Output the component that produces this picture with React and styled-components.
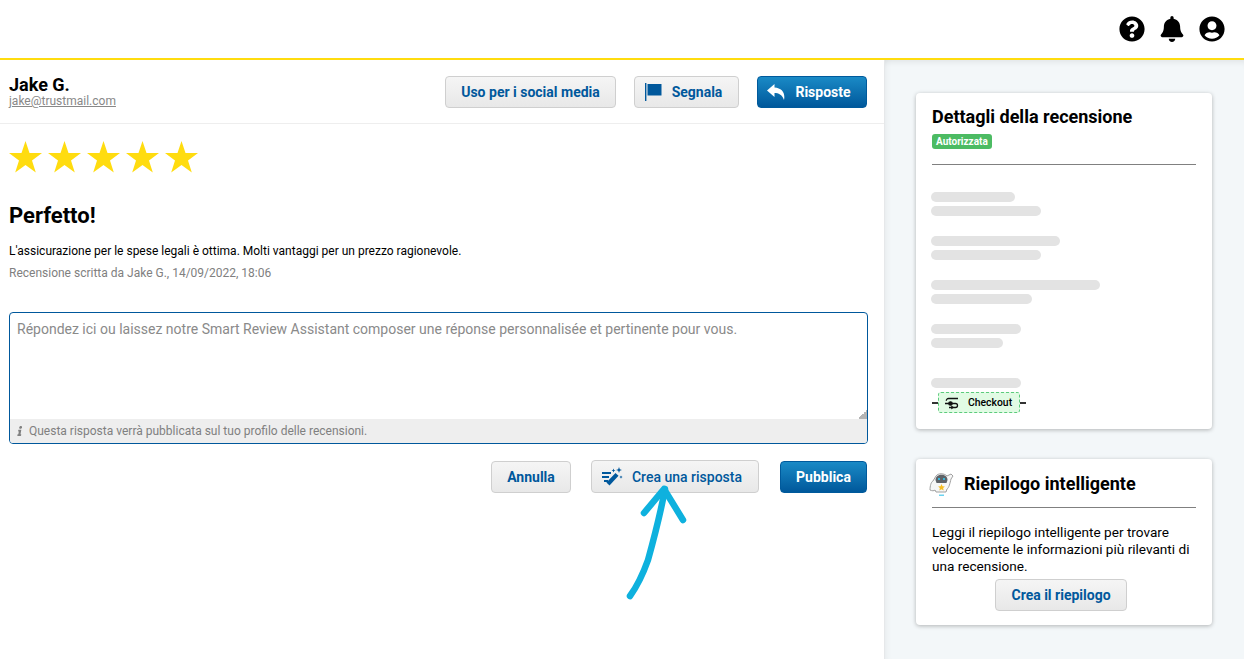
import React from 'react'
import styled, { createGlobalStyle, css } from 'styled-components'
import { FaQuestionCircle, FaBell, FaUserCircle, FaInfo } from 'react-icons/fa'

const GlobalStyle = createGlobalStyle`
  html, body {
    margin: 0;
    height: 100%;
    overflow: hidden;
    background: #fff;
    font-family: Roboto, "Liberation Sans", sans-serif;
    color: #000;
  }
  #root { height: 100%; }
  * { box-sizing: border-box; }
`

const Page = styled.div`
  position: relative;
  display: flex;
  flex-direction: column;
  height: 659px;
  overflow: hidden;
`

const TopBar = styled.header`
  height: 60px;
  flex: none;
  display: flex;
  align-items: center;
  justify-content: flex-end;
  gap: 14px;
  padding: 0 19px 1px 0;
  background: #fff;
  border-bottom: 2px solid #ffdc0f;
  font-size: 26px;
  svg { display: block; }
`

const Body = styled.div`
  flex: 1;
  display: flex;
  min-height: 0;
`

const Main = styled.main`
  width: 885px;
  flex: none;
  background: #fff;
  border-right: 1px solid #e6e8ea;
`

const ReviewHead = styled.div`
  height: 64px;
  display: flex;
  align-items: flex-start;
  justify-content: space-between;
  padding: 16px 17px 0 9px;
  border-bottom: 1px solid #eeeeee;
`

const Reviewer = styled.div`
  margin-top: -1px;
  h3 {
    margin: 0;
    font-size: 18px;
    line-height: 19px;
    font-weight: 700;
  }
  a {
    display: block;
    font-size: 12px;
    line-height: 15px;
    color: #888;
    text-decoration: underline;
  }
`

const ButtonRow = styled.div`
  display: flex;
  justify-content: flex-end;
  align-items: center;
  gap: 18px;
`

const Button = styled.button`
  height: ${({ $tall }) => ($tall ? 33 : 32)}px;
  width: ${({ $w }) => $w}px;
  display: flex;
  align-items: center;
  justify-content: center;
  gap: ${({ $iconGap }) => $iconGap || 0}px;
  padding: 0 ${({ $iconGap }) => ($iconGap ? 6 : 0)}px 0 0;
  border-radius: 4px;
  font-family: Roboto, sans-serif;
  font-size: 14px;
  font-weight: ${({ $medium }) => ($medium ? 500 : 700)};
  ${({ $primary }) =>
    $primary
      ? css`
          color: #fff;
          border: 1px solid #005a9c;
          background: linear-gradient(180deg, #1a8ac6 0%, #00589b 100%);
        `
      : css`
          color: #00589c;
          border: 1px solid #cfcfcf;
          background: linear-gradient(180deg, #f5f5f5 0%, #e8e8e8 100%);
        `}
  svg { flex: none; display: block; }
`

const Stars = styled.div`
  display: flex;
  gap: 6px;
  padding: 16px 0 0 9px;
`

const Content = styled.section`
  padding: 0 16px 0 9px;
`

const Title = styled.h1`
  margin: 29px 0 0;
  font-size: 22px;
  line-height: 28px;
  font-weight: 700;
`

const Text = styled.p`
  margin: 13px 0 0;
  font-size: 12px;
  line-height: 16px;
`

const Meta = styled.p`
  margin: 6px 0 0;
  font-size: 12px;
  line-height: 16px;
  color: #808080;
`

const ReplyBox = styled.div`
  position: relative;
  margin-top: 31px;
  height: 132px;
  display: flex;
  flex-direction: column;
  border: 1px solid #00589c;
  border-radius: 4px;
  overflow: hidden;
`

const Placeholder = styled.div`
  flex: 1;
  padding: 8px 7px;
  font-size: 14px;
  line-height: 17px;
  color: #8a8a8a;
`

const Grip = styled.span`
  position: absolute;
  right: 0;
  bottom: 24px;
  width: 9px;
  height: 9px;
  background: linear-gradient(135deg, transparent 50%, #b4b4b4 50%);
`

const Hint = styled.div`
  height: 24px;
  display: flex;
  align-items: center;
  gap: 4px;
  padding: 0 5px;
  background: #eeeeee;
  font-size: 12px;
  color: #808080;
  svg { transform: skewX(-10deg); }
`

const Actions = styled(ButtonRow)`
  margin: 16px 1px 0 0;
  gap: 20px;
  button:last-child { margin-left: 1px; }
`

const Side = styled.aside`
  flex: 1;
  padding: 33px 32px 0 31px;
  background: #f3f7f9;
  box-shadow: inset 6px 0 6px -5px rgba(0, 0, 0, 0.06), inset 0 7px 6px -5px rgba(0, 0, 0, 0.08);
  display: flex;
  flex-direction: column;
  gap: 30px;
`

const Card = styled.div`
  height: ${({ $h }) => $h}px;
  padding: ${({ $pad }) => $pad}px 16px 0;
  background: #fff;
  border-radius: 4px;
  box-shadow: 0 1px 4px rgba(0, 0, 0, 0.28);
`

const CardTitle = styled.h2`
  margin: 0;
  font-size: 18px;
  line-height: 16px;
  font-weight: 700;
`

const Badge = styled.span`
  display: inline-block;
  margin-top: 9px;
  padding: 0 4px;
  height: 15px;
  line-height: 15px;
  border-radius: 3px;
  background: #4cbb63;
  color: #fff;
  font-size: 10px;
  font-weight: 700;
  vertical-align: top;
`

const Rule = styled.hr`
  margin: ${({ $top }) => $top || 0}px 0 0;
  border: 0;
  height: 1px;
  background: #808080;
`

const SkeletonList = styled.div`
  margin-top: 27px;
  display: flex;
  flex-direction: column;
  gap: 4px;
  margin-left: -1px;
`

const Skeleton = styled.div`
  height: 10px;
  width: ${({ $w }) => $w}px;
  margin-top: ${({ $top }) => $top || 0}px;
  border-radius: 5px;
  background: #e3e3e3;
`

const CheckoutRow = styled.div`
  display: flex;
  align-items: center;
  width: 94px;
  margin-top: 4px;
  &::before, &::after {
    content: '';
    width: 6px;
    height: 2px;
    background: #333;
  }
`

const Checkout = styled.div`
  width: 82px;
  height: 21px;
  display: flex;
  align-items: center;
  gap: 9px;
  padding-left: 5px;
  border: 1.5px dashed #5ccb7c;
  border-radius: 3px;
  background: #e1fbe4;
  font-size: 10.400px;
  font-weight: 500;
`

const SummaryHead = styled.div`
  display: flex;
  align-items: center;
  gap: 10px;
  height: 33px;
  margin-left: -3px;
  margin-bottom: 7px;
  h2 {
    margin: 0;
    font-size: 18px;
    font-weight: 700;
  }
`

const SummaryText = styled.p`
  margin: 16px 0 0;
  font-size: 13.600px;
  line-height: 17px;
`

const Centered = styled.div`
  display: flex;
  justify-content: center;
  margin-top: 4px;
  padding-right: 6px;
`

const ArrowMark = styled.svg`
  position: absolute;
  left: 620px;
  top: 480px;
  width: 75px;
  height: 125px;
  pointer-events: none;
`

const Star = () => (
  <svg width="33" height="33" viewBox="0 0 33 33">
    <path fill="#ffdc0f" d="M16.500 1l4 12h12.500l-10 7.400 3.800 12.100-10.300-7.500-10.300 7.500 3.800-12.100L0 13h12.500z" />
  </svg>
)

const FlagIcon = () => (
  <svg width="17" height="18" viewBox="0 0 17 18" fill="#00589c">
    <rect x="0" y="0" width="1.400" height="18" />
    <path d="M2.500 1h14v11.500h-14z" />
  </svg>
)

const ReplyIcon = () => (
  <svg width="18" height="16" viewBox="0 0 18 16" fill="#fff">
    <path d="M7.500 0L0 6.500 7.500 13V9c4 0 7.500 1.500 9.500 7 1.500-7-2-12-9.500-12.500z" />
  </svg>
)

const WandIcon = () => (
  <svg width="21" height="19" viewBox="0 0 21 19" fill="#00589c">
    <rect x="0" y="5" width="9" height="2" />
    <rect x="0" y="9" width="7" height="2" />
    <rect x="2" y="13" width="4" height="2" />
    <path d="M13.500 6l3 2.800-9 9.700-3.100-2.900z" />
    <path d="M17 0l.8 2.200 2.200.8-2.200.8-.8 2.200-.8-2.200-2.200-.8 2.200-.8zM11.500 1.500l.6 1.400 1.400.6-1.400.6-.6 1.400-.6-1.400-1.400-.6 1.400-.6zM19 8.500l.5 1.100 1.100.5-1.100.5-.5 1.100-.5-1.100-1.100-.5 1.100-.5z" />
  </svg>
)

const CheckoutIcon = () => (
  <svg width="15" height="14" viewBox="0 0 15 14" fill="none" stroke="#111" strokeWidth="1.300">
    <path d="M14 2.500H4.500a2.200 2.200 0 0 0-2.200 2.200" />
    <path d="M1 7.500h10.500a2 2 0 0 1 0 4H5" />
    <circle cx="6.500" cy="7.500" r="1.700" fill="#111" />
    <path d="M7.500 9.800v3.200l2.200-1.600z" fill="#111" strokeWidth="0.500" />
  </svg>
)

const RobotIcon = () => (
  <svg width="25" height="24" viewBox="0 0 25 24">
    <path fill="#f6f6f6" stroke="#a0a0a0" strokeWidth="1" d="M4 9c-2 1-3 5-3 9 2 1 4 1 5 0l1 2h10l1-3c2-1 3-6 4-10l2-3-2-2-4 2c-3-3-9-3-11 0z" />
    <path fill="#5f6368" d="M6.500 8c0-7 12-7 12 0l-1 3h-10z" />
    <rect x="9" y="6" width="2" height="2" fill="#38b6d8" />
    <rect x="14" y="6" width="2" height="2" fill="#38b6d8" />
    <path fill="#f5bd23" d="M12.500 12l1 2.300 2.400.2-1.800 1.600.6 2.400-2.200-1.300-2.200 1.300.6-2.400-1.800-1.600 2.400-.2z" />
    <rect x="10" y="22.500" width="5" height="1.500" fill="#6cd3f0" />
  </svg>
)

const Arrow = () => (
  <ArrowMark viewBox="0 0 75 125" fill="none" stroke="#0eb1de" strokeWidth="6.500" strokeLinecap="round" strokeLinejoin="round">
    <path d="M10 116c8-11 13-22 18-36 5-18 12-44 17-71" />
    <path d="M24 33L44 9l19 31" />
  </ArrowMark>
)

export default function App() {
  return (
    <Page>
      <GlobalStyle />
      <TopBar>
        <FaQuestionCircle />
        <FaBell />
        <FaUserCircle />
      </TopBar>
      <Body>
        <Main>
          <ReviewHead>
            <Reviewer>
              <h3>Jake G.</h3>
              <a>jake@trustmail.com</a>
            </Reviewer>
            <ButtonRow>
              <Button $w={171}>Uso per i social media</Button>
              <Button $w={105} $iconGap={10}>
                <FlagIcon />
                Segnala
              </Button>
              <Button $w={110} $iconGap={10} $primary>
                <ReplyIcon />
                Risposte
              </Button>
            </ButtonRow>
          </ReviewHead>
          <Stars>
            <Star />
            <Star />
            <Star />
            <Star />
            <Star />
          </Stars>
          <Content>
            <Title>Perfetto!</Title>
            <Text>L'assicurazione per le spese legali è ottima. Molti vantaggi per un prezzo ragionevole.</Text>
            <Meta>Recensione scritta da Jake G., 14/09/2022, 18:06</Meta>
            <ReplyBox>
              <Placeholder>
                Répondez ici ou laissez notre Smart Review Assistant composer une réponse personnalisée et pertinente pour vous.
              </Placeholder>
              <Grip />
              <Hint>
                <FaInfo size={10} />
                Questa risposta verrà pubblicata sul tuo profilo delle recensioni.
              </Hint>
            </ReplyBox>
            <Actions>
              <Button $w={80}>Annulla</Button>
              <Button $w={168} $iconGap={9} $tall $medium>
                <WandIcon />
                Crea una risposta
              </Button>
              <Button $w={87} $primary>Pubblica</Button>
            </Actions>
          </Content>
        </Main>
        <Side>
          <Card $h={336} $pad={16}>
            <CardTitle>Dettagli della recensione</CardTitle>
            <Badge>Autorizzata</Badge>
            <Rule $top={15} />
            <SkeletonList>
              <Skeleton $w={84} />
              <Skeleton $w={110} />
              <Skeleton $w={129} $top={16} />
              <Skeleton $w={110} />
              <Skeleton $w={169} $top={16} />
              <Skeleton $w={101} />
              <Skeleton $w={90} $top={16} />
              <Skeleton $w={72} />
              <Skeleton $w={90} $top={26} />
            </SkeletonList>
            <CheckoutRow>
              <Checkout>
                <CheckoutIcon />
                Checkout
              </Checkout>
            </CheckoutRow>
          </Card>
          <Card $h={166} $pad={8}>
            <SummaryHead>
              <RobotIcon />
              <h2>Riepilogo intelligente</h2>
            </SummaryHead>
            <Rule />
            <SummaryText>
              Leggi il riepilogo intelligente per trovare velocemente le informazioni più rilevanti di una recensione.
            </SummaryText>
            <Centered>
              <Button $w={132}>Crea il riepilogo</Button>
            </Centered>
          </Card>
        </Side>
      </Body>
      <Arrow />
    </Page>
  )
}
